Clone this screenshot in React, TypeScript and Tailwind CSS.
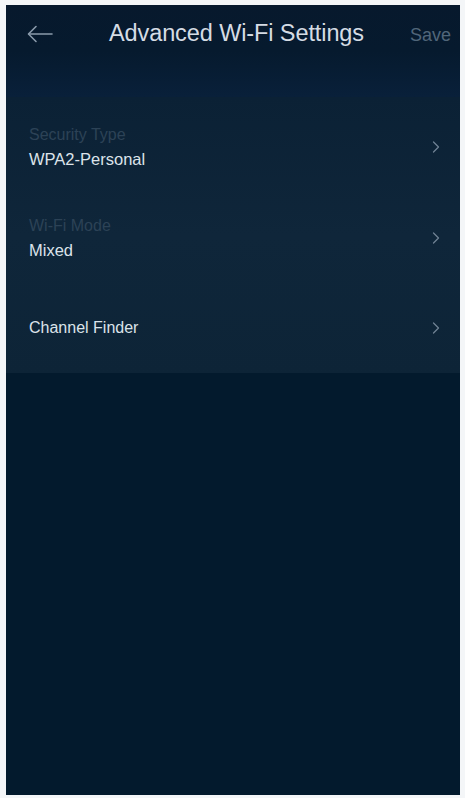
import { ChevronRight } from "lucide-react";

const rows = [
  { label: "Security Type", value: "WPA2-Personal" },
  { label: "Wi-Fi Mode", value: "Mixed" },
];

function BackArrow() {
  return (
    <svg width="26" height="18" viewBox="0 0 26 18" fill="none" stroke="#8a9aab" strokeWidth="1.6" strokeLinecap="round" strokeLinejoin="round">
      <path d="M25 9H2" />
      <path d="M9 1.5L1.5 9L9 16.5" />
    </svg>
  );
}

export default function App() {
  return (
    <div className="w-[465px] h-[798px] bg-[#f4f6f8] pl-[6px] pr-[5px] pt-[5px] pb-[3px]" style={{ fontFamily: '"Liberation Sans", Arial, sans-serif' }}>
      <div className="h-full flex flex-col bg-[#031a2d]">
        {/* header */}
        <div className="h-[92px] bg-gradient-to-b from-[#07192d] via-[#061a2e] to-[#09203a]">
          <div className="h-[58px] flex items-center px-[21px]">
            <div className="w-[26px] shrink-0 flex">
              <BackArrow />
            </div>
            <div className="flex-1 text-center text-[23.5px] text-[#d5dce4] tracking-[-0.1px] pl-[10px]">
              Advanced Wi-Fi Settings
            </div>
            <div className="text-[18px] text-[#51667a] pt-[2px] -mr-[12px]">Save</div>
          </div>
        </div>

        {/* list panel */}
        <div className="h-[276px] bg-gradient-to-b from-[#0b2135] via-[#0f263a] to-[#0d2437] pl-[23px] pr-[14px]">
          {rows.map((r) => (
            <div key={r.label} className="h-[91px] flex items-center justify-between pt-[8px]">
              <div className="flex flex-col">
                <span className="text-[16px] text-[#2c4256] leading-[25px]">{r.label}</span>
                <span className="text-[16.5px] text-[#dce3ea] leading-[25px]">{r.value}</span>
              </div>
              <ChevronRight className="w-[20px] h-[20px] text-[#6f8294]" strokeWidth={1.5} />
            </div>
          ))}
          <div className="h-[93px] flex items-center justify-between pt-[5px]">
            <span className="text-[16px] text-[#dce3ea]">Channel Finder</span>
            <ChevronRight className="w-[20px] h-[20px] text-[#6f8294]" strokeWidth={1.5} />
          </div>
        </div>

        <div className="flex-1 bg-[#031a2d]" />
      </div>
    </div>
  );
}
